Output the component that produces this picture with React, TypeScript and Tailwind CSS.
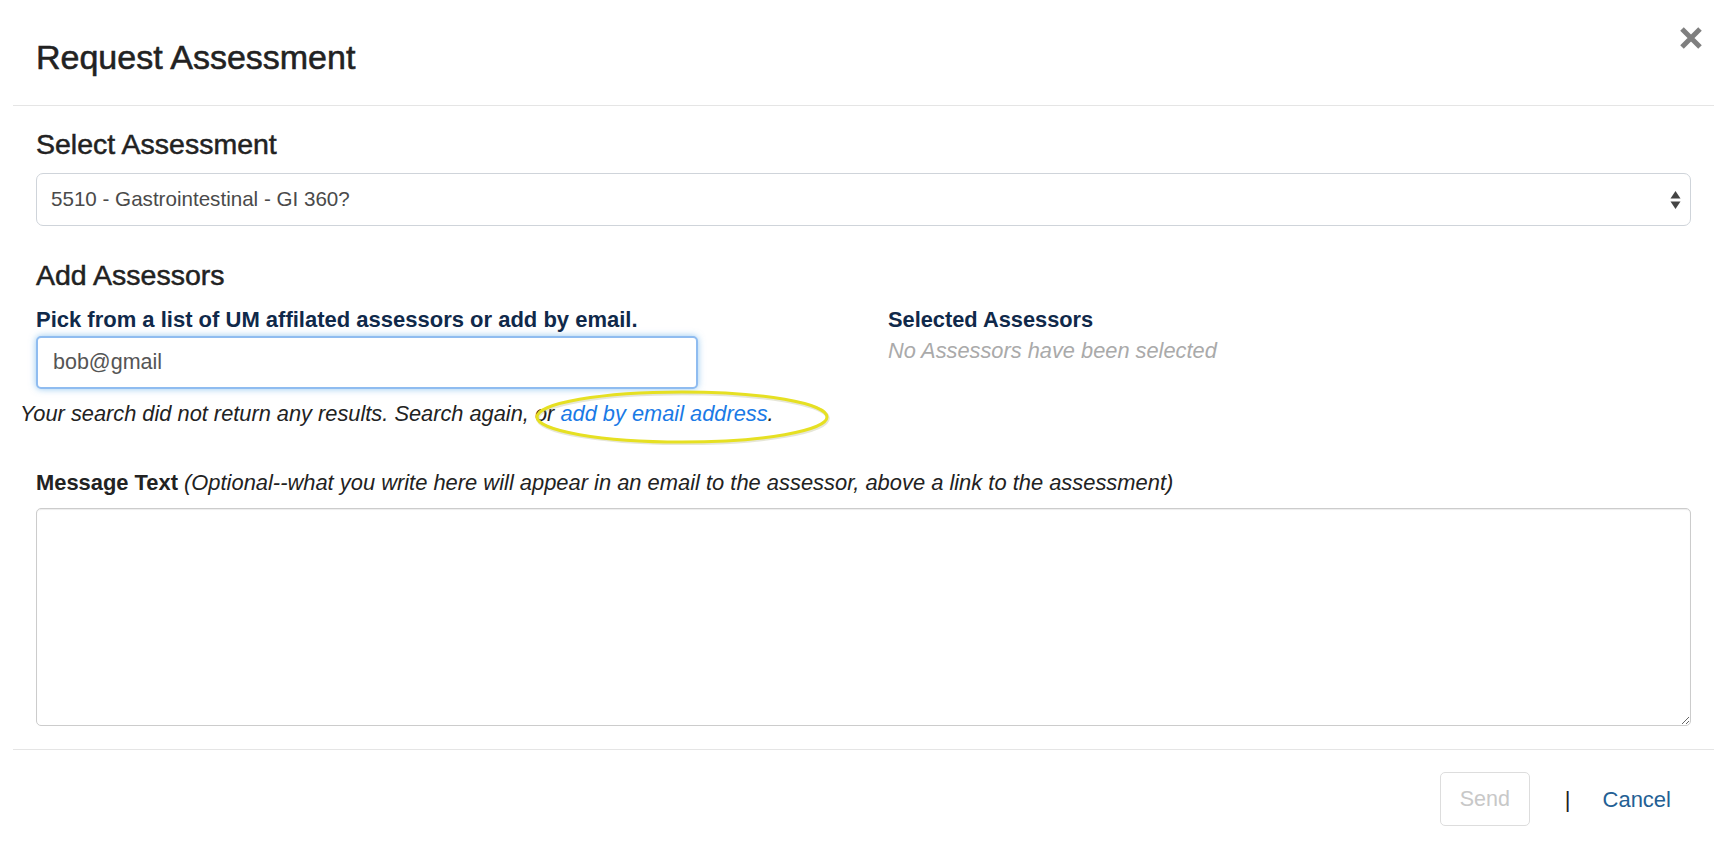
import React from "react";

export default function App() {
  return (
    <div className="relative h-[861px] w-full overflow-hidden bg-white font-['Liberation_Sans',Arial,sans-serif] text-[#333]">
      <div className="mx-[13px]">
        {/* Header */}
        <div className="relative border-b border-[#e5e5e5] px-[23px] pb-[28px] pt-[37px]">
          <h1 className="text-[34px] leading-[40px] text-[#222] [-webkit-text-stroke:0.55px_#222]">
            Request Assessment
          </h1>
          <button
            aria-label="Close"
            className="absolute right-[12px] top-[27px] flex h-[22px] w-[22px] items-center justify-center"
          >
            <svg width="22" height="22" viewBox="0 0 22 22">
              <path d="M2 2 L20 20 M20 2 L2 20" stroke="#7f7f7f" strokeWidth="5" strokeLinecap="butt" />
            </svg>
          </button>
        </div>

        {/* Body */}
        <div className="px-[23px] pt-[21px]">
          <h2 className="text-[28.5px] leading-[34px] text-[#222] [-webkit-text-stroke:0.5px_#222]">
            Select Assessment
          </h2>
          <div className="relative mt-[12px] flex h-[53px] items-center rounded-[7px] border border-[#cfd4da] bg-white pl-[14px] text-[20.6px] text-[#4a4a4a]">
            5510 - Gastrointestinal - GI 360?
            <svg className="absolute right-[9px] top-[16px]" width="11" height="20" viewBox="0 0 11 20">
              <path d="M5.5 1 L10.5 8.5 L0.5 8.5 Z" fill="#444" />
              <path d="M5.5 19 L10.5 11.5 L0.5 11.5 Z" fill="#444" />
            </svg>
          </div>

          <h2 className="mt-[32px] text-[28.5px] leading-[34px] text-[#222] [-webkit-text-stroke:0.5px_#222]">
            Add Assessors
          </h2>

          <div className="mt-[15px] flex">
            <div className="w-[852px]">
              <div className="text-[22px] font-bold leading-[26px] text-[#10294a]">
                Pick from a list of UM affilated assessors or add by email.
              </div>
              <div className="mt-[3px] flex h-[53px] w-[662px] items-center rounded-[5px] border-2 border-[#8fbcf0] bg-white pl-[15px] text-[21.5px] text-[#555] shadow-[0_0_7px_rgba(102,175,233,0.7)]">
                bob@gmail
              </div>
              <div className="relative -ml-[16px] mt-[12px] text-[21.8px] italic leading-[26px] text-[#222]">
                Your search did not return any results. Search again, or{" "}
                <span className="text-[#1a7ae6]">add by email address</span>.
                <svg
                  className="absolute left-[514px] top-[-12px]"
                  width="296"
                  height="56"
                  viewBox="0 0 296 56"
                >
                  <ellipse cx="148" cy="28" rx="145" ry="25" fill="none" stroke="#9a9a60" strokeOpacity="0.25" strokeWidth="4" transform="translate(0.8 1.2)" />
                  <ellipse cx="148" cy="28" rx="145" ry="25" fill="none" stroke="#e6e022" strokeWidth="3" />
                </svg>
              </div>
            </div>
            <div className="flex-1">
              <div className="text-[21.8px] font-bold leading-[26px] text-[#10294a]">Selected Assessors</div>
              <div className="mt-[5px] text-[21.8px] italic leading-[26px] text-[#aaa]">
                No Assessors have been selected
              </div>
            </div>
          </div>

          <div className="mt-[43px] text-[21.9px] leading-[26px] text-[#222]">
            <span className="font-bold">Message Text</span>{" "}
            <span className="italic">
              (Optional--what you write here will appear in an email to the assessor, above a link to the assessment)
            </span>
          </div>
          <textarea className="mt-[12px] block h-[218px] w-full rounded-[5px] border border-[#cccccc] bg-white shadow-[inset_0_1px_1px_rgba(0,0,0,0.075)] outline-none" />
        </div>

        {/* Footer */}
        <div className="mt-[23px] flex items-center justify-end border-t border-[#e5e5e5] pr-[43px] pt-[22px]">
          <button className="flex h-[54px] w-[90px] items-center justify-center rounded-[5px] border border-[#dddddd] bg-white text-[21.5px] text-[#c8c8c8]">
            Send
          </button>
          <span className="ml-[35px] text-[22px] text-[#222]">|</span>
          <span className="ml-[32px] text-[22px] text-[#245f94]">Cancel</span>
        </div>
      </div>
    </div>
  );
}
